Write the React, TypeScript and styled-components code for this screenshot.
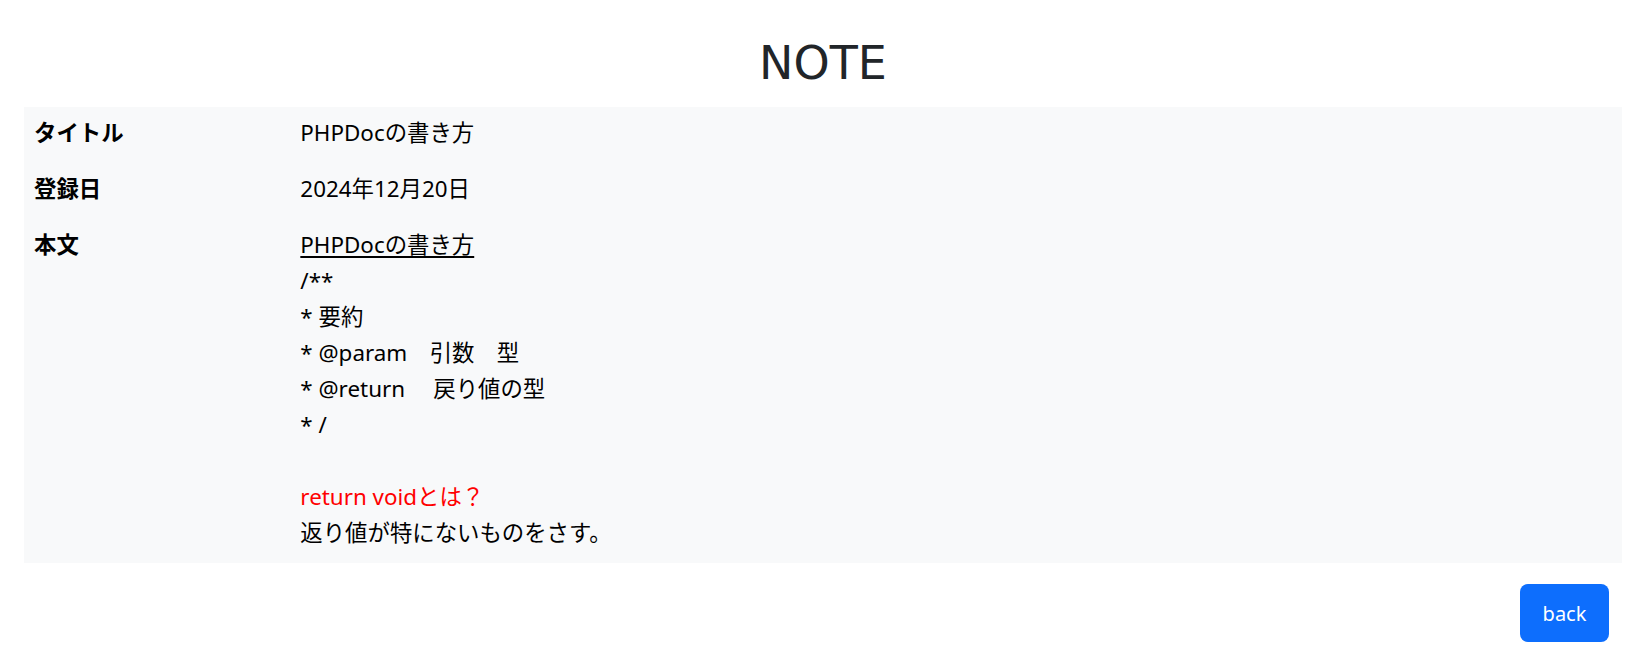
import React from "react";
import styled, { createGlobalStyle } from "styled-components";

const Global = createGlobalStyle`
  html, body { margin: 0; padding: 0; background: #ffffff; }
  body {
    font-family: "Noto Sans", "Noto Sans CJK JP", sans-serif;
    color: #212529;
  }
`;

const Page = styled.div`
  padding: 0 24px;
`;

const Title = styled.h1`
  margin: 0;
  height: 107px;
  display: flex;
  align-items: center;
  justify-content: center;
  font-family: "Comic Sans MS", "DejaVu Sans", sans-serif;
  font-weight: 400;
  font-size: 46px;
  color: #212529;
  padding-top: 18px;
  box-sizing: border-box;
`;

const Sheet = styled.div`
  background: #f8f9fa;
  display: grid;
  grid-template-columns: 1fr 5fr;
  font-size: 22.4px;
  line-height: 36px;
  color: #000;
`;

const Label = styled.div`
  padding: 8px 10px 12px;
  font-weight: 700;
`;

const Value = styled.div`
  padding: 8px 10px 12px;
`;

const Line = styled.div<{ $tone?: "red" }>`
  min-height: 36px;
  white-space: pre;
  color: ${(p) => (p.$tone === "red" ? "#ff0000" : "#000")};
`;

const Heading = styled.span`
  text-decoration: underline;
  text-underline-offset: 3px;
`;

const Footer = styled.div`
  display: flex;
  justify-content: flex-end;
  padding: 21px 13px 0 0;
`;

const BackButton = styled.button`
  width: 89px;
  height: 58px;
  border: none;
  border-radius: 8px;
  background: #0d6efd;
  color: #fff;
  font-family: "Noto Sans", sans-serif;
  font-size: 20px;
  cursor: pointer;
`;

const bodyLines: { text: string; tone?: "red" }[] = [
  { text: "/**" },
  { text: "* 要約" },
  { text: "* @param　引数　型" },
  { text: "* @return　 戻り値の型" },
  { text: "* /" },
  { text: "" },
  { text: "return voidとは？", tone: "red" },
  { text: "返り値が特にないものをさす。" },
];

export default function App() {
  return (
    <Page>
      <Global />
      <Title>NOTE</Title>
      <Sheet>
        <Label>タイトル</Label>
        <Value>PHPDocの書き方</Value>
        <Label>登録日</Label>
        <Value>2024年12月20日</Value>
        <Label>本文</Label>
        <Value>
          <Line>
            <Heading>PHPDocの書き方</Heading>
          </Line>
          {bodyLines.map((l, i) => (
            <Line key={i} $tone={l.tone}>
              {l.text}
            </Line>
          ))}
        </Value>
      </Sheet>
      <Footer>
        <BackButton>back</BackButton>
      </Footer>
    </Page>
  );
}
